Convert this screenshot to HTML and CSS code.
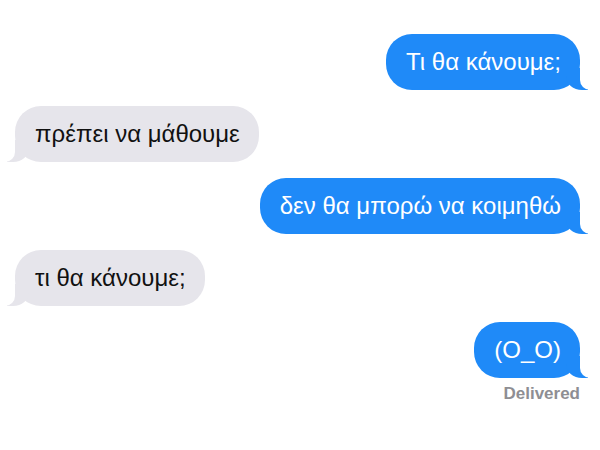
FILE: index.html
```html
<!DOCTYPE html>
<html lang="el">

<head>
  <meta charset="UTF-8" />
  <meta name="viewport" content="width=device-width, initial-scale=1.0" />
  <title>Messages</title>
  <link rel="stylesheet" href="styles.css">
</head>

<body>
  <div class="chat">
    <div class="bubble sent">Τι θα κάνουμε;</div>
    <div class="bubble received">πρέπει να μάθουμε</div>
    <div class="bubble sent">δεν θα μπορώ να κοιμηθώ</div>
    <div class="bubble received">τι θα κάνουμε;</div>
    <div class="last">
      <div class="bubble sent">(O_O)</div>
      <span class="status">Delivered</span>
    </div>
  </div>
</body>

</html>
```

FILE: styles.css
```css
* {
  margin: 0;
  padding: 0;
  box-sizing: border-box;
}

body {
  width: 600px;
  height: 450px;
  background: #fff;
  font-family: 'Liberation Sans', Arial, sans-serif;
}

.chat {
  display: flex;
  flex-direction: column;
  gap: 16px;
  padding: 34px 20px 0 15px;
}

.bubble {
  position: relative;
  height: 56px;
  padding: 0 19px 0 20px;
  border-radius: 26px;
  display: flex;
  align-items: center;
  font-size: 24px;
  white-space: nowrap;
}

.sent {
  align-self: flex-end;
  background: #1f8af8;
  color: #fff;
}

.received {
  align-self: flex-start;
  background: #e6e5eb;
  color: #111;
}

/* tails */
.bubble::before,
.bubble::after {
  content: "";
  position: absolute;
  bottom: 0;
  height: 22px;
}

.sent::before {
  right: -8px;
  width: 22px;
  background: #1f8af8;
  border-bottom-left-radius: 16px 14px;
}

.sent::after {
  right: -12px;
  width: 12px;
  background: #fff;
  border-bottom-left-radius: 10px;
}

.received::before {
  left: -8px;
  width: 22px;
  background: #e6e5eb;
  border-bottom-right-radius: 16px 14px;
}

.received::after {
  left: -12px;
  width: 12px;
  background: #fff;
  border-bottom-right-radius: 10px;
}

.last {
  align-self: flex-end;
  display: flex;
  flex-direction: column;
  align-items: flex-end;
  gap: 6px;
}

.status {
  font-size: 17px;
  font-weight: bold;
  color: #8e8e93;
}
```
